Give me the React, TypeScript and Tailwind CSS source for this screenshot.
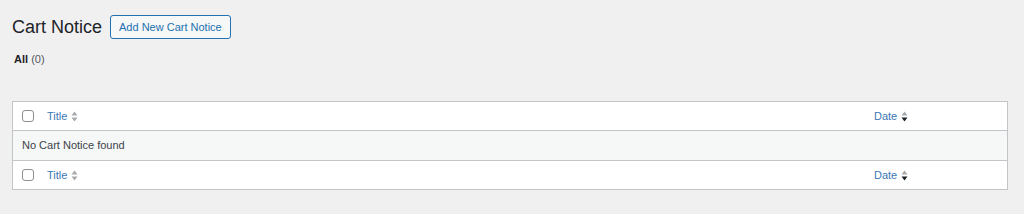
function SortIcon({ active = false }: { active?: boolean }) {
  return (
    <svg width="7" height="11" viewBox="0 0 7 11" className="ml-[4px] inline-block">
      <path d="M0.5 4.5 L3.5 0.5 L6.5 4.5 Z" fill="#a7aaad" />
      <path d="M0.5 6.5 L3.5 10.5 L6.5 6.5 Z" fill={active ? "#1d2327" : "#a7aaad"} />
    </svg>
  );
}

function HeaderRow({ bottom }: { bottom?: boolean }) {
  return (
    <div
      className={`flex h-[29px] items-center bg-white ${bottom ? "border-t border-[#c3c4c7]" : "border-b border-[#c3c4c7]"}`}
    >
      <div className="flex w-[34px] shrink-0 items-center pl-[9px]">
        <span className="block h-[12px] w-[12px] rounded-[3px] border border-[#8c8f94] bg-white" />
      </div>
      <div className="flex flex-1 items-center text-[#3a78b5]">
        Title
        <SortIcon />
      </div>
      <div className="flex w-[133px] items-center text-[#3a78b5]">
        Date
        <SortIcon active />
      </div>
    </div>
  );
}

export default function App() {
  return (
    <div
      className="h-[214px] w-[1024px] bg-[#f0f0f1] px-[12px] text-[11px] text-[#3c434a]"
      style={{ fontFamily: '"Liberation Sans", Arial, sans-serif' }}
    >
      <div className="flex items-center pt-[15px]">
        <h1 className="text-[18px] leading-[24px] text-[#1d2327]">Cart Notice</h1>
        <button className="ml-[8px] h-[24px] rounded-[3px] border border-[#2271b1] bg-[#f6f7f7] px-[8px] text-[11px] text-[#2271b1]">
          Add New Cart Notice
        </button>
      </div>

      <div className="mt-[13px] pl-[2px] leading-[14px]">
        <span className="font-bold text-[#1d2327]">All</span>{" "}
        <span className="text-[#50575e]">(0)</span>
      </div>

      <div className="mt-[35px] w-[996px] border border-[#c3c4c7] bg-white">
        <HeaderRow />
        <div className="flex h-[29px] items-center bg-[#f6f7f7] pl-[9px]">No Cart Notice found</div>
        <HeaderRow bottom />
      </div>
    </div>
  );
}
